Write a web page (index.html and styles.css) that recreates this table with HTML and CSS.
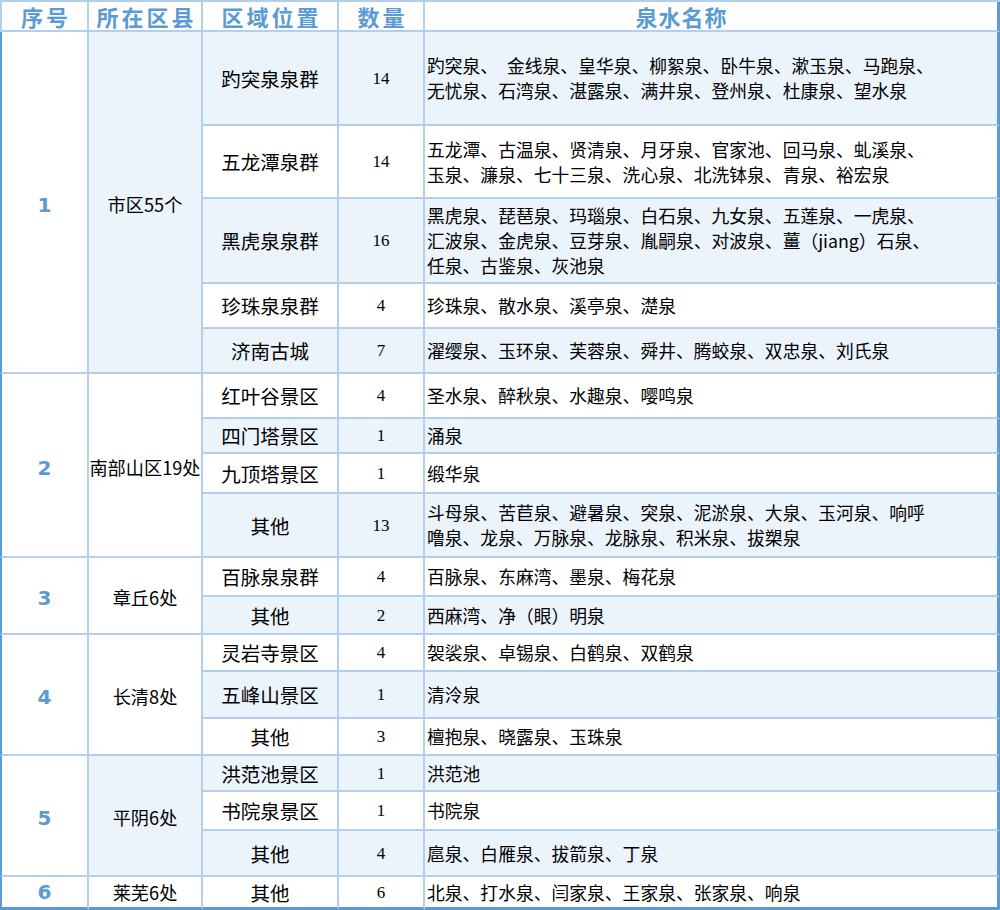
FILE: index.html
```html
<!DOCTYPE html>
<html lang="zh-CN">
<head>
<meta charset="utf-8">
<title>济南名泉</title>
<link rel="stylesheet" href="styles.css">
</head>
<body>
<table class="springs">
  <colgroup>
    <col class="c-idx"><col class="c-area"><col class="c-loc"><col class="c-num"><col class="c-names">
  </colgroup>
  <thead>
    <tr class="h30">
      <th class="idx-h">序号</th>
      <th>所在区县</th>
      <th>区域位置</th>
      <th>数量</th>
      <th class="names names-h">泉水名称</th>
    </tr>
  </thead>
  <tbody>
    <tr class="alt h94">
      <td class="idx" rowspan="5">1</td>
      <td class="area" rowspan="5">市区55个</td>
      <td class="loc">趵突泉泉群</td>
      <td class="num">14</td>
      <td class="names">趵突泉、&ensp;金线泉、皇华泉、柳絮泉、卧牛泉、漱玉泉、马跑泉、无忧泉、石湾泉、湛露泉、满井泉、登州泉、杜康泉、望水泉</td>
    </tr>
    <tr class="h73">
      <td class="loc">五龙潭泉群</td>
      <td class="num">14</td>
      <td class="names">五龙潭、古温泉、贤清泉、月牙泉、官家池、回马泉、虬溪泉、玉泉、濂泉、七十三泉、洗心泉、北洗钵泉、青泉、裕宏泉</td>
    </tr>
    <tr class="alt h85">
      <td class="loc">黑虎泉泉群</td>
      <td class="num">16</td>
      <td class="names">黑虎泉、琵琶泉、玛瑙泉、白石泉、九女泉、五莲泉、一虎泉、汇波泉、金虎泉、豆芽泉、胤嗣泉、对波泉、薑（jiang）石泉、任泉、古鉴泉、灰池泉</td>
    </tr>
    <tr class="h45">
      <td class="loc">珍珠泉泉群</td>
      <td class="num">4</td>
      <td class="names">珍珠泉、散水泉、溪亭泉、濋泉</td>
    </tr>
    <tr class="alt h45 group-end">
      <td class="loc">济南古城</td>
      <td class="num">7</td>
      <td class="names">濯缨泉、玉环泉、芙蓉泉、舜井、腾蛟泉、双忠泉、刘氏泉</td>
    </tr>

    <tr class="h45">
      <td class="idx" rowspan="4">2</td>
      <td class="area" rowspan="4">南部山区19处</td>
      <td class="loc">红叶谷景区</td>
      <td class="num">4</td>
      <td class="names">圣水泉、醉秋泉、水趣泉、嘤鸣泉</td>
    </tr>
    <tr class="alt h35">
      <td class="loc">四门塔景区</td>
      <td class="num">1</td>
      <td class="names">涌泉</td>
    </tr>
    <tr class="h40">
      <td class="loc">九顶塔景区</td>
      <td class="num">1</td>
      <td class="names">缎华泉</td>
    </tr>
    <tr class="alt h64">
      <td class="loc">其他</td>
      <td class="num">13</td>
      <td class="names">斗母泉、苦苣泉、避暑泉、突泉、泥淤泉、大泉、玉河泉、响呼噜泉、龙泉、万脉泉、龙脉泉、积米泉、拔槊泉</td>
    </tr>

    <tr class="h39">
      <td class="idx" rowspan="2">3</td>
      <td class="area" rowspan="2">章丘6处</td>
      <td class="loc">百脉泉泉群</td>
      <td class="num">4</td>
      <td class="names">百脉泉、东麻湾、墨泉、梅花泉</td>
    </tr>
    <tr class="alt h38">
      <td class="loc">其他</td>
      <td class="num">2</td>
      <td class="names">西麻湾、净（眼）明泉</td>
    </tr>

    <tr class="h37">
      <td class="idx" rowspan="3">4</td>
      <td class="area" rowspan="3">长清8处</td>
      <td class="loc">灵岩寺景区</td>
      <td class="num">4</td>
      <td class="names">袈裟泉、卓锡泉、白鹤泉、双鹤泉</td>
    </tr>
    <tr class="alt h47">
      <td class="loc">五峰山景区</td>
      <td class="num">1</td>
      <td class="names">清泠泉</td>
    </tr>
    <tr class="h37">
      <td class="loc">其他</td>
      <td class="num">3</td>
      <td class="names">檀抱泉、晓露泉、玉珠泉</td>
    </tr>

    <tr class="alt h36">
      <td class="idx" rowspan="3">5</td>
      <td class="area" rowspan="3">平阴6处</td>
      <td class="loc">洪范池景区</td>
      <td class="num">1</td>
      <td class="names">洪范池</td>
    </tr>
    <tr class="h39">
      <td class="loc">书院泉景区</td>
      <td class="num">1</td>
      <td class="names">书院泉</td>
    </tr>
    <tr class="alt h46">
      <td class="loc">其他</td>
      <td class="num">4</td>
      <td class="names">扈泉、白雁泉、拔箭泉、丁泉</td>
    </tr>

    <tr class="h33 last">
      <td class="idx">6</td>
      <td class="area">莱芜6处</td>
      <td class="loc">其他</td>
      <td class="num">6</td>
      <td class="names">北泉、打水泉、闫家泉、王家泉、张家泉、响泉</td>
    </tr>
  </tbody>
</table>
</body>
</html>
```

FILE: styles.css
```css
html, body {
  margin: 0;
  padding: 0;
  background: #ffffff;
}

.springs {
  border-collapse: separate;
  border-spacing: 0;
  table-layout: fixed;
  width: 1000px;
  border-top: 2px solid #b3cfed;
  font-family: "Noto Sans CJK SC", "Noto Sans", sans-serif;
  font-size: 17.8px;
  line-height: 25px;
  color: #000000;
}

.c-idx { width: 89px; }
.c-area { width: 114px; }
.c-loc { width: 136px; }
.c-num { width: 86px; }
.c-names { width: 575px; }

.springs th,
.springs td {
  padding: 0;
  text-align: center;
  vertical-align: middle;
  border-right: 2px solid #b3cfed;
  border-bottom: 2px solid #b3cfed;
  white-space: nowrap;
  background: #ffffff;
}

.springs tr.alt td {
  background: #ebf3fb;
}

.springs th {
  font-weight: 700;
  font-size: 22px;
  letter-spacing: 3px;
  color: #5b9bd5;
  text-indent: 3px;
}

.springs th.idx-h {
  border-left: 2px solid #b3cfed;
}

.springs th.names-h {
  letter-spacing: 1px;
  text-indent: 1px;
}

.springs .names {
  text-align: left;
  white-space: normal;
  padding: 0 58px 0 2px;
  border-right: 3px solid #5b9bd5;
}

.springs th.names {
  text-align: center;
  padding: 0 62px 0 2px;
}

.springs td.idx,
.springs tr.alt td.idx {
  background: #ffffff;
  border-left: 2px solid #5b9bd5;
  font-family: "DejaVu Sans", "Noto Sans", sans-serif;
  font-weight: 700;
  font-size: 20px;
  color: #5b9bd5;
  padding-top: 6px;
}

.springs td.area {
  font-size: 18.2px;
  padding-top: 4px;
}

.springs td.loc {
  font-size: 19.5px;
}

.springs .num {
  font-family: "Liberation Serif", serif;
  font-size: 17px;
}

.springs tr.last td {
  border-bottom: 3px solid #5b9bd5;
}

.springs tr.last td.idx,
.springs tr.last td.area {
  padding-top: 0;
}

.h30 { height: 30px; }
.h33 { height: 33px; }
.h35 { height: 35px; }
.h36 { height: 36px; }
.h37 { height: 37px; }
.h38 { height: 38px; }
.h39 { height: 39px; }
.h40 { height: 40px; }
.h45 { height: 45px; }
.h46 { height: 46px; }
.h47 { height: 47px; }
.h64 { height: 64px; }
.h73 { height: 73px; }
.h85 { height: 85px; }
.h94 { height: 94px; }
```
